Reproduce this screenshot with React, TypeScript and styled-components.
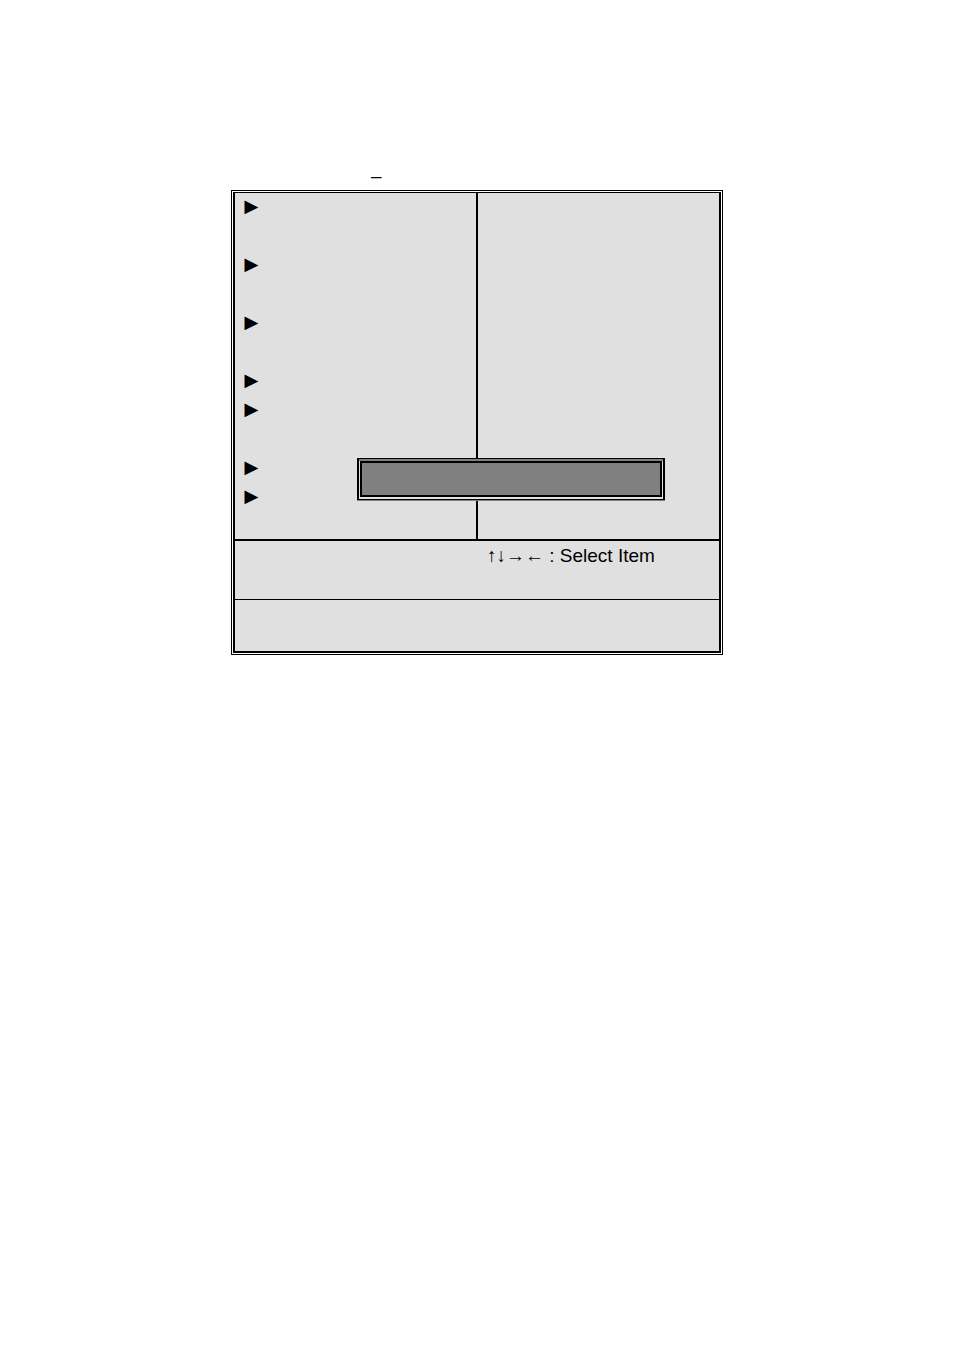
import React from "react";
import styled, { createGlobalStyle } from "styled-components";

const GlobalStyle = createGlobalStyle`
  * { box-sizing: border-box; }
  body {
    margin: 0;
    background: #fff;
    color: #000;
    font-family: "Liberation Sans", Arial, sans-serif;
    font-size: 19px;
    line-height: 29px;
  }
`;

const Page = styled.main`
  max-width: 492px;
  margin: 0 auto;
  padding: 161px 0 40px;
`;

const Caption = styled.p`
  margin: 0;
  padding-left: 140px;
`;

const Frame = styled.section`
  position: relative;
  border: 1px solid #000;
  padding: 1px;
`;

const Screen = styled.div`
  border: 2px solid #000;
  border-top-width: 1px;
  background: #e0e0e0;
`;

const Columns = styled.div`
  display: grid;
  grid-template-columns: 1fr 1fr;
  border-bottom: 2px solid #000;
`;

const Menu = styled.ul`
  list-style: none;
  margin: 0 -1px 0 0;
  padding: 0 5px 27px;
  border-right: 2px solid #000;
  font-size: 23px;
  line-height: 26px;
`;

const MenuItem = styled.li<{ $lines: number }>`
  height: ${(p) => p.$lines * 29}px;
`;

const KeyHelp = styled.div`
  display: grid;
  grid-template-columns: 1fr 1fr;
  min-height: 59px;
  border-bottom: 1px solid #000;
`;

const KeyText = styled.p`
  grid-column: 2;
  margin: 0;
  padding-left: 10px;
  white-space: nowrap;
`;

const Footer = styled.footer`
  height: 51px;
`;

const Dialog = styled.div`
  position: absolute;
  top: 267px;
  left: 125px;
  width: 308px;
  height: 42px;
  padding: 2px 1px;
  border: solid #000;
  border-width: 1px 2px;
  background: linear-gradient(#808080 2px, #e0e0e0 2px);
  box-shadow: 0 1px #808080;
`;

const DialogBody = styled.div`
  height: 100%;
  border: 2px solid #000;
  background: #808080;
`;

const menuLines = [2, 2, 2, 1, 2, 1, 1];

export default function App() {
  return (
    <>
      <GlobalStyle />
      <Page>
        <Caption>–</Caption>
        <Frame>
          <Screen>
            <Columns>
              <Menu>
                {menuLines.map((lines, i) => (
                  <MenuItem key={i} $lines={lines}>►</MenuItem>
                ))}
              </Menu>
            </Columns>
            <KeyHelp>
              <KeyText>↑↓→← : Select Item</KeyText>
            </KeyHelp>
            <Footer />
          </Screen>
          <Dialog role="dialog">
            <DialogBody />
          </Dialog>
        </Frame>
      </Page>
    </>
  );
}
